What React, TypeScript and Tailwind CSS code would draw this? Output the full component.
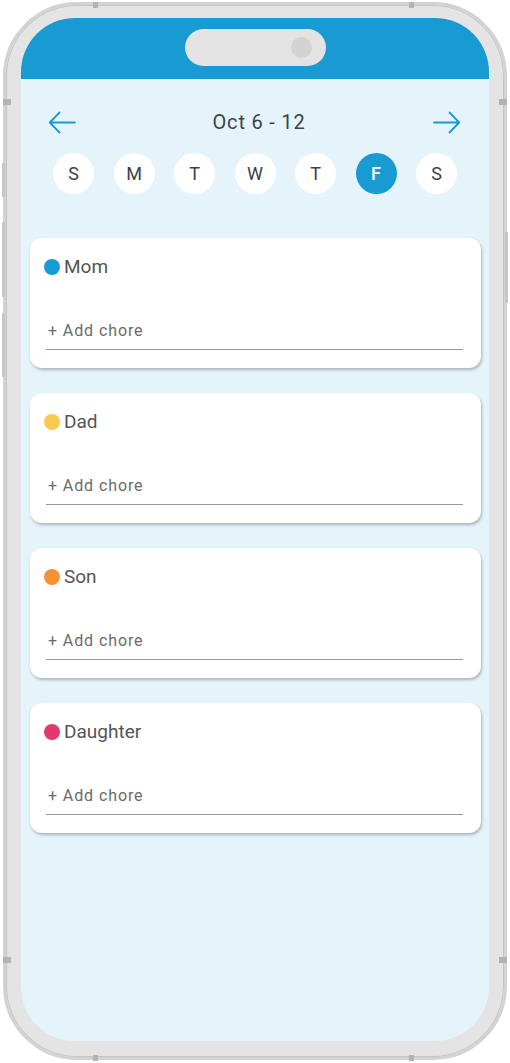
const days = ['S', 'M', 'T', 'W', 'T', 'F', 'S'];

const members = [
  { name: 'Mom', color: 'bg-[#189bd3]' },
  { name: 'Dad', color: 'bg-[#fcc94f]' },
  { name: 'Son', color: 'bg-[#f69232]' },
  { name: 'Daughter', color: 'bg-[#e1396b]' },
];

function Arrow({ flip }: { flip?: boolean }) {
  return (
    <svg width="28" height="23" viewBox="0 0 28 23" fill="none" className={flip ? 'rotate-180' : ''}>
      <path d="M27 11.5H2M11.5 1.5L1.8 11.5L11.5 21.5" stroke="#189bd3" strokeWidth="1.8" strokeLinecap="round" strokeLinejoin="round" />
    </svg>
  );
}

// side buttons + antenna bands of the phone shell
function FrameDetails() {
  const band = '#b3b3b3';
  const btn = '#c6c6c6';
  return (
    <svg className="absolute inset-0 pointer-events-none" width="510" height="1063" viewBox="0 0 510 1063">
      <rect x="2" y="163" width="3" height="34" rx="1" fill={btn} />
      <rect x="2" y="222" width="3" height="75" rx="1" fill={btn} />
      <rect x="2" y="313" width="3" height="64" rx="1" fill={btn} />
      <rect x="505" y="232" width="3" height="71" rx="1" fill={btn} />
      <rect x="93" y="2" width="5" height="6" fill={band} />
      <rect x="409" y="2" width="5" height="6" fill={band} />
      <rect x="93" y="1055" width="5" height="6" fill={band} />
      <rect x="409" y="1055" width="5" height="6" fill={band} />
      <rect x="3" y="99" width="8" height="6" fill={band} />
      <rect x="499" y="99" width="8" height="6" fill={band} />
      <rect x="3" y="957" width="8" height="6" fill={band} />
      <rect x="499" y="957" width="8" height="6" fill={band} />
    </svg>
  );
}

export default function App() {
  return (
    <div className="relative w-[510px] h-[1063px] bg-white pt-[2px] pb-[3px] px-[3px] font-['Roboto',sans-serif]">
      {/* Phone frame */}
      <div className="h-full rounded-[74px] border-[3px] border-[#d3d3d3] bg-[#e4e4e4] shadow-[inset_0_0_0_1px_#c4c4c4] pt-[13px] px-[15px] pb-[16px]">
        <div className="h-full rounded-[54px] overflow-hidden bg-[#e5f3fa] flex flex-col">
          {/* Status bar */}
          <div className="h-[61px] shrink-0 bg-[#189bd3] flex justify-center pt-[11px]">
            <div className="w-[141px] h-[37px] rounded-full bg-[#e3e3e3] flex items-center justify-end pr-[14px]">
              <div className="w-[21px] h-[21px] rounded-full bg-[#d3d3d3]" />
            </div>
          </div>

          {/* Week nav */}
          <div className="mt-[31px] h-6 flex items-center justify-between pl-[27px] pr-[28px]">
            <Arrow />
            <span className="pl-[9px] text-[20px] tracking-[0.8px] text-[#3d434a]">Oct 6 - 12</span>
            <Arrow flip />
          </div>

          {/* Days */}
          <div className="mt-[19px] flex justify-between px-[32px]">
            {days.map((d, i) => (
              <div
                key={i}
                className={
                  i === 5
                    ? 'w-[41px] h-[41px] rounded-full bg-[#189bd3] text-white flex items-center justify-center text-[18px] font-medium'
                    : 'w-[41px] h-[41px] rounded-full bg-white text-[#3a3f47] flex items-center justify-center text-[18px]'
                }
              >
                {d}
              </div>
            ))}
          </div>

          {/* Member cards */}
          <div className="mt-[44px] pl-[9px] pr-[8px] flex flex-col gap-[25px]">
            {members.map((m) => (
              <div
                key={m.name}
                className="h-[130px] bg-white rounded-[12px] shadow-[1px_2px_3px_rgba(60,70,80,0.35)] pt-[17px] pl-[14px]"
              >
                <div className="h-6 flex items-center gap-[4px]">
                  <div className={`w-4 h-4 rounded-full ${m.color}`} />
                  <span className="text-[19px] text-[#555555]">{m.name}</span>
                </div>
                <div className="mt-[42px] ml-[2px] mr-[18px] border-b border-[#9a9a9a] pb-[8px] pl-[2px]">
                  <span className="block leading-5 text-[16px] tracking-[0.9px] text-[#6b6b6b]">+ Add chore</span>
                </div>
              </div>
            ))}
          </div>
        </div>
      </div>
      <FrameDetails />
    </div>
  );
}
